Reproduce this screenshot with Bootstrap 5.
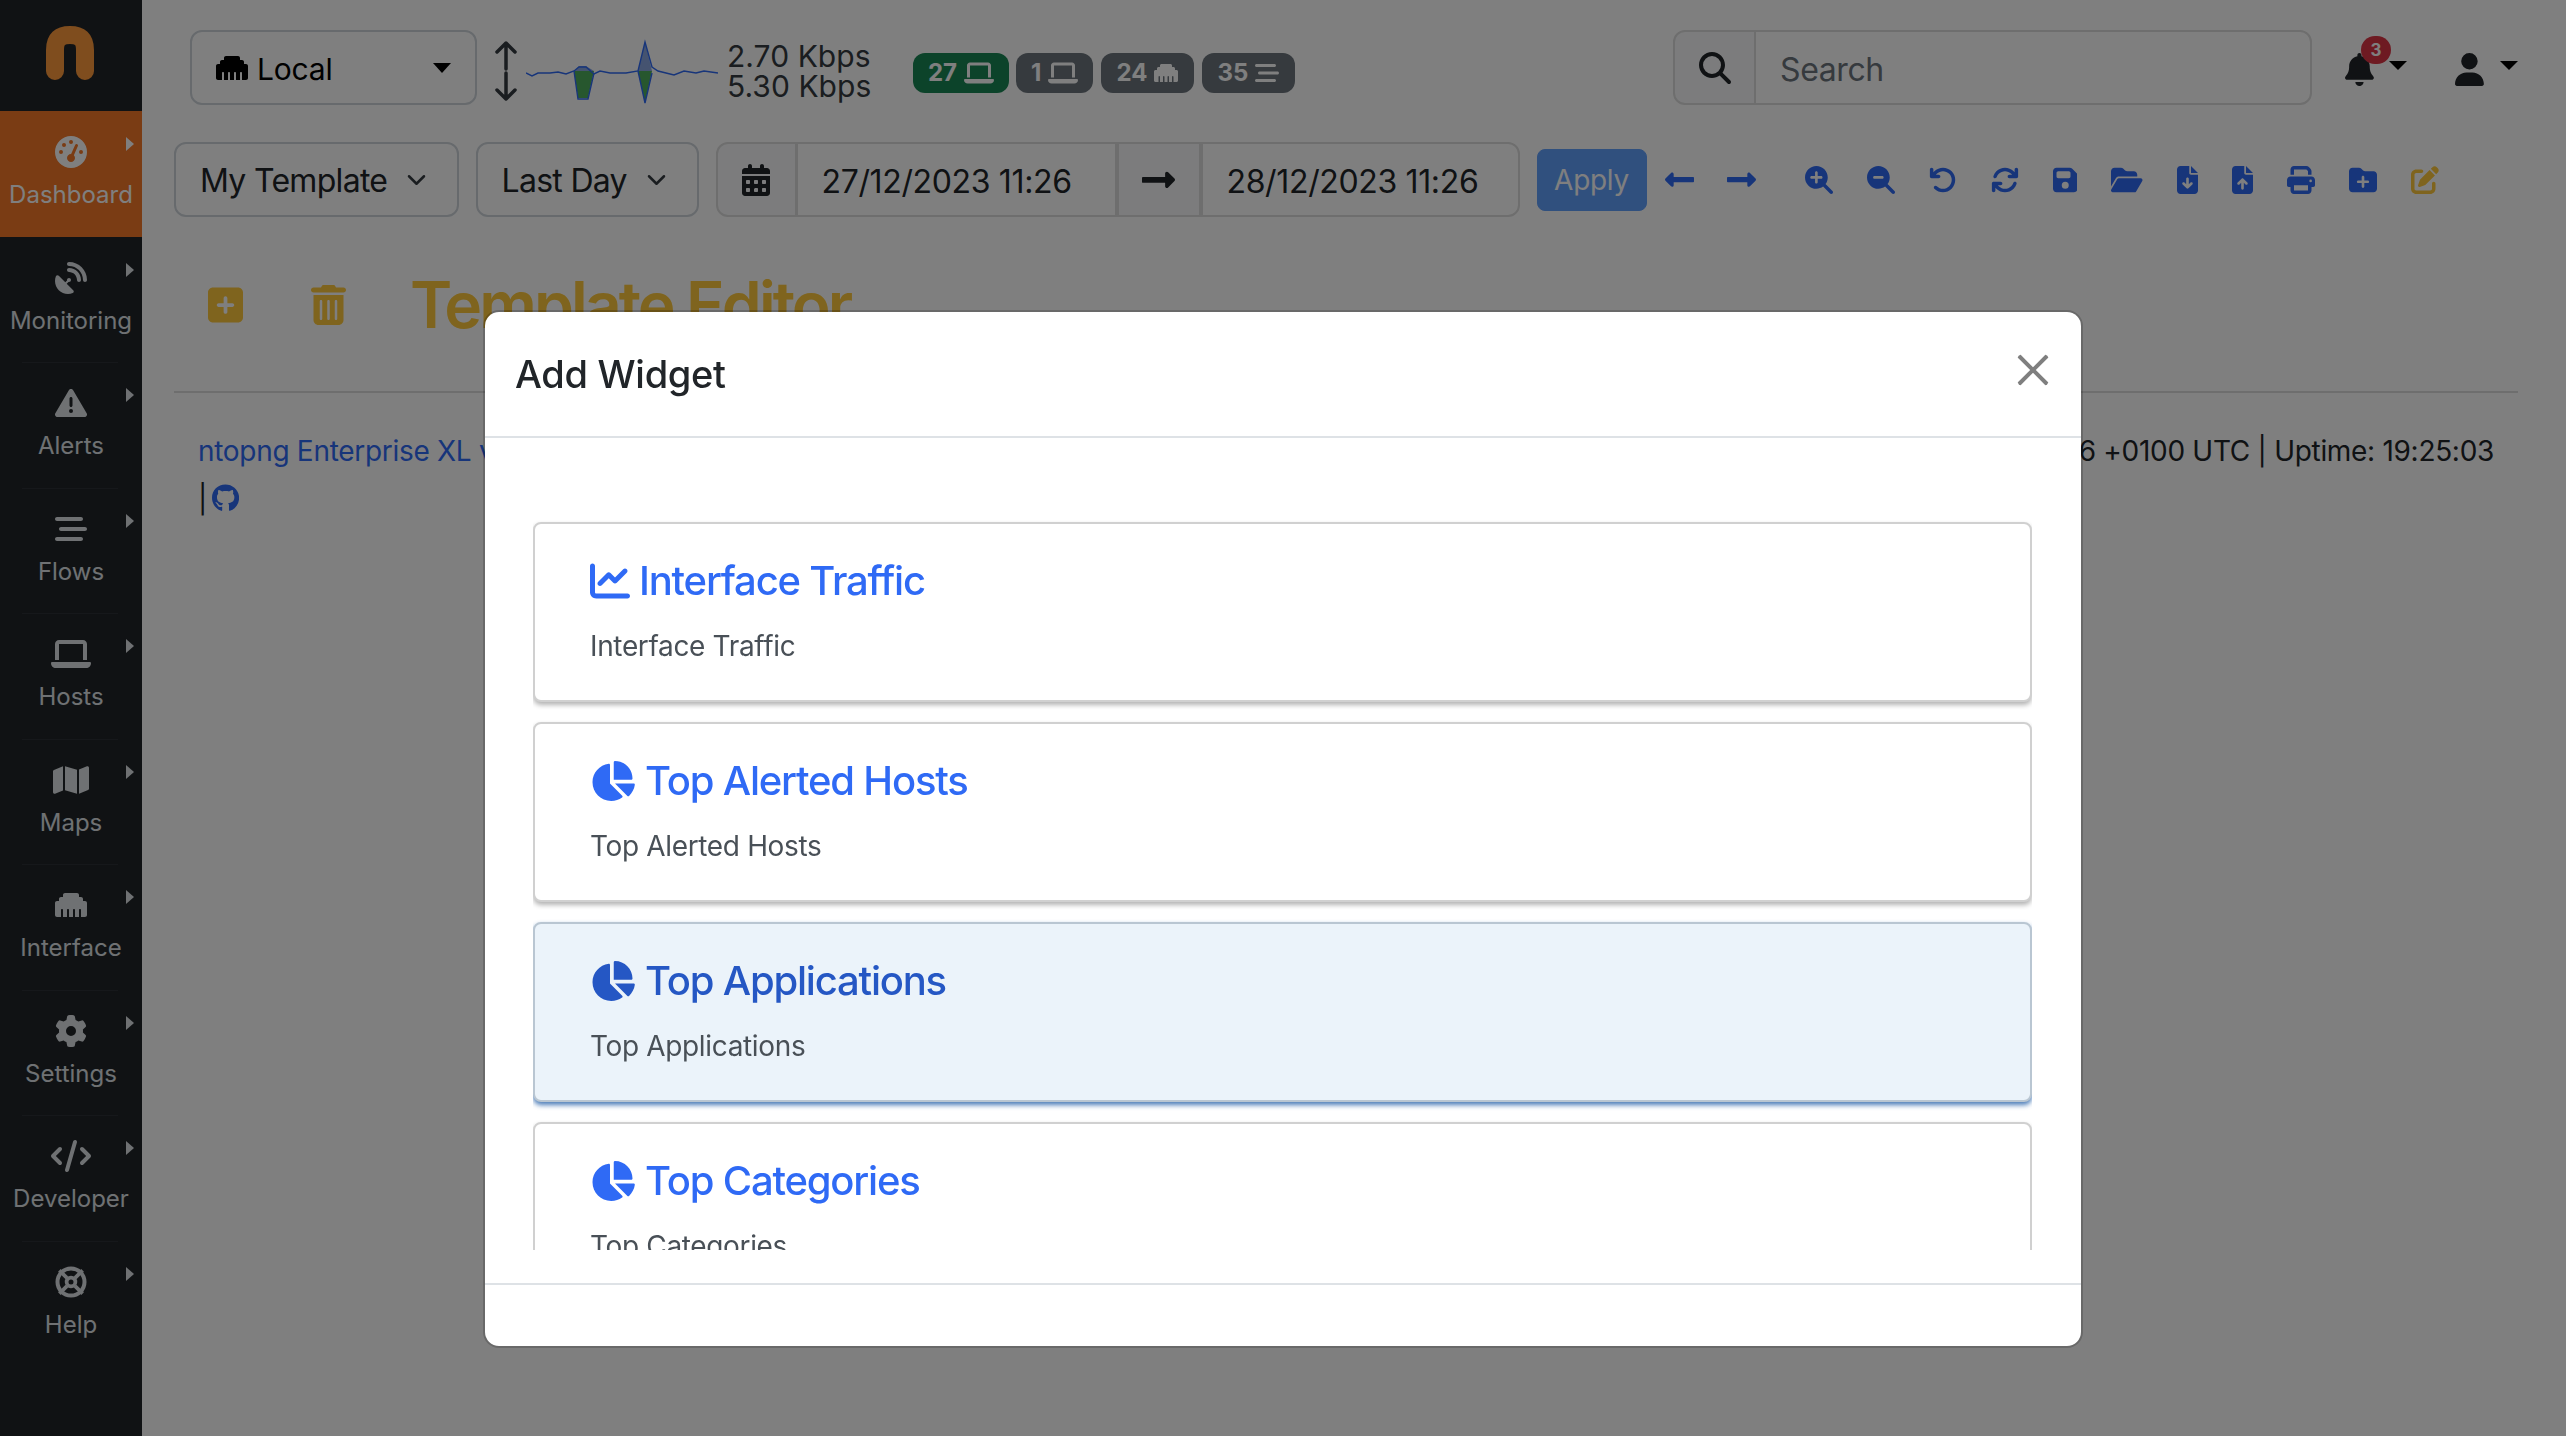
<!DOCTYPE html>
<html lang="en">
<head>
<meta charset="utf-8">
<title>Template Editor</title>
<link href="https://cdn.jsdelivr.net/npm/bootstrap@5.3.0/dist/css/bootstrap.min.css" rel="stylesheet">
<style>
html,body{height:100%;overflow:hidden}
body{font-family:Inter,"Liberation Sans",sans-serif;font-size:28px;color:#212529;background:#fff}
svg{fill:currentColor;flex:none;display:block}
a{color:#2f6af5;text-decoration:none}
.side{width:142px;flex:none;background:#212529;color:#dee2e6}
.brandbox{height:111px;padding:26px 0 0 46px;color:#ff9a3c}
.sitem{position:relative;height:125.5px;padding-top:25px;text-align:center;font-size:24px;line-height:36px}
.sitem svg{height:32px;margin:0 auto 9px}
.sitem.on{background:#f47828;color:#fff}
.sitem+.sitem:not(.nosep)::before{content:"";position:absolute;left:22px;right:24px;top:0;border-top:1px solid #2c3136}
.sarrow{position:absolute;left:126px;top:26px;border-left:8px solid currentColor;border-top:7px solid transparent;border-bottom:7px solid transparent}
.page{min-width:0}
.topline{height:75px;margin:30px 48px 0 48px}
.ifbtn{width:287px;height:75px;border:2px solid #ced4da;border-radius:12px;background:#fff;font-size:30px;padding:3px 24px 0;color:#000;letter-spacing:-.2px}
.ifbtn svg{height:32px;margin-right:9px;margin-top:-3px}
.ifbtn::after{margin-left:auto;border-width:10px 9px 0;color:#000;vertical-align:0;margin-top:-3px}
.tp-arrows{margin-left:17px;width:24px;margin-top:6px}
.spark{margin-left:8px;width:192px;height:70px;margin-top:8px}
.rates{margin-left:9px;font-size:30px;line-height:30px;white-space:nowrap;color:#343a40;width:186px;margin-top:6px;letter-spacing:.05px}
.chip{height:40px;display:inline-flex;align-items:center;gap:7px;padding:0 15px;font-size:24px;font-weight:700;border-radius:12px;margin-right:7px;line-height:1;margin-top:10px}
.chip+.chip{margin-right:8px}
.chip svg{height:24px}
.chip.w2{padding-right:16px}
.srch{width:639px;height:75px;margin-left:auto}
.srch .input-group-text,.srch .form-control{border:2px solid #dcdcdc;background:#fff;font-size:32px;border-radius:12px;height:75px}
.srch .input-group-text{width:83px;justify-content:center;padding:0;background:#f8f9fa}
.srch .input-group-text svg{height:32px}
.srch .form-control{padding:3px 24px 0;margin-left:-2px!important;letter-spacing:-.4px}
.srch .form-control::placeholder{color:#6c757d;opacity:1}
.bellbox{position:relative;margin-left:33px;width:62px;height:33px;margin-top:4px}
.bellbox svg{height:33px}
.userbox{position:relative;margin-left:48px;width:63px;height:33px;margin-top:4px}
.dcaret{position:absolute;right:0;top:8px;border-top:9px solid #000;border-left:9px solid transparent;border-right:9px solid transparent}
.bellpill{position:absolute;left:16px;top:-17px;width:30px;height:28px;padding:0;font-size:17px;line-height:28px}
.toolline{height:75px;margin:37px 48px 0 32px}
.toolline .form-select,.toolline .form-control,.toolline .input-group-text{height:75px;font-size:32px;border:2px solid #ced4da;border-radius:12px;color:#212529}
.toolline .form-select{padding:3px 24px 0;background-position:right 27px center;background-size:27px 20px;letter-spacing:-.7px}
.sel1{width:284.5px}
.sel2{width:223px;margin-left:17px}
.dates{width:auto;flex-wrap:nowrap;margin-left:17px}
.toolline .input-group-text{background:#f8f9fa;border-color:#dcdcdc;justify-content:center;padding:0}
.toolline .form-control{border-color:#dcdcdc;padding:3px 24px 0;letter-spacing:-.35px}
.cal{width:81px}
.cal svg{height:32px}
.arr{width:84px;margin-left:0!important}
.arr svg{width:33px}
.d1{width:321px!important;flex:none!important;margin-left:-1px!important}
.d2{width:319px!important;flex:none!important;margin-left:0!important}
.applyb{margin-left:17px;width:110px;height:62px;font-size:28px;padding:0;border-radius:8px;letter-spacing:-.3px}
.navarrows{margin-left:18px;gap:33px;color:#2f6af5}
.navarrows svg{width:29px}
.tools{margin-left:49px;gap:34.1px;color:#2f6af5}
.tools svg{height:28px}
.edit{color:#ffc83c}
.titleline{margin:49px 0 0 66px;height:77px;color:#ffc83c}
.titleline svg{height:40px}
.titleline .tr{margin-left:68px}
.titleline h2{margin:0 0 0 64px;font-size:64px;font-weight:600;line-height:77px;white-space:nowrap;letter-spacing:-2.9px;color:inherit}
.rule{margin:48px 48px 0 32px;border-top:2px solid #dcdcdc;opacity:1}
.infoline{margin:34px 72px 0 56px;line-height:48px;font-size:28px;letter-spacing:-.3px}
.infoline svg{height:28px;display:inline-block;vertical-align:-3px;color:#2f6af5;margin-left:-3px}
.modal-backdrop.show{opacity:.5}
.wmodal{--bs-modal-width:1600px}
.wmodal .modal-dialog{margin:310px auto 0;max-width:1600px;width:1600px}
.wmodal .modal-content{border-width:2px;border-radius:16px}
.wmodal .modal-header{height:126px;padding:40px 32px 0 30px;align-items:flex-start;border-bottom:2px solid #dee2e6;border-radius:0}
.wmodal .modal-title{font-size:38px;line-height:45px;font-weight:500;letter-spacing:-.3px}
.wmodal .btn-close{width:32px;height:32px;padding:0;margin:2px 0 0 auto;background-size:32px;box-sizing:border-box}
.wmodal .modal-body{padding:32px 49px 33px 48px}
.wlist{height:780px;overflow:hidden;padding-top:52px}
.wcard{height:180px;margin-bottom:20px;border:2px solid #d0d0d0;border-radius:8px;box-shadow:0 3px 5px rgba(0,0,0,.3);padding:33px 53px 0 55px;background:#fff}
.wcard h5{display:flex;align-items:center;margin:0 0 20px;font-size:40px;line-height:48px;font-weight:500;color:#2f6af5;letter-spacing:-1.2px}
.wcard p{margin:0;font-size:28px;line-height:42px;color:#495057;letter-spacing:-.35px}
.wcard h5 svg{height:40px;margin-right:10px}
.wcard.chartc h5 svg{margin-right:9px}
.wcard.hl{background:#ebf3fa;border-color:#b9c6d2;box-shadow:0 3px 5px rgba(15,80,160,.75)}
.wcard.hl h5{color:#2557c4}
.wmodal .modal-footer{min-height:63px;padding:0;border-top:2px solid #dee2e6;border-radius:0}
</style>
</head>
<body class="d-flex">
<svg width="0" height="0" class="position-absolute">
<defs>
<path id="i-eth" d="M0 224V416c0 17.7 14.3 32 32 32H96V336c0-8.8 7.2-16 16-16s16 7.2 16 16V448h64V336c0-8.8 7.2-16 16-16s16 7.2 16 16V448h64V336c0-8.8 7.2-16 16-16s16 7.2 16 16V448h64V336c0-8.8 7.2-16 16-16s16 7.2 16 16V448h64c17.7 0 32-14.3 32-32V224c0-17.7-14.3-32-32-32H448V160c0-17.7-14.3-32-32-32H384V96c0-17.7-14.3-32-32-32H160c-17.7 0-32 14.3-32 32v32H96c-17.7 0-32 14.3-32 32v32H32c-17.7 0-32 14.3-32 32z"/>
<path id="i-lap" d="M128 32C92.7 32 64 60.7 64 96V352h64V96H512V352h64V96c0-35.3-28.7-64-64-64H128zM19.2 384C8.6 384 0 392.6 0 403.2C0 445.6 34.4 480 76.8 480H563.2c42.4 0 76.8-34.4 76.8-76.8c0-10.6-8.6-19.2-19.2-19.2H19.2z"/>
<path id="i-flow" d="M0 96C0 78.3 14.3 64 32 64H416c17.7 0 32 14.3 32 32s-14.3 32-32 32H32C14.3 128 0 113.7 0 96zM64 256c0-17.7 14.3-32 32-32H480c17.7 0 32 14.3 32 32s-14.3 32-32 32H96c-17.7 0-32-14.3-32-32zM448 416c0 17.7-14.3 32-32 32H32c-17.7 0-32-14.3-32-32s14.3-32 32-32H416c17.7 0 32 14.3 32 32z"/>
<path id="i-pie" d="M304 240V16.6c0-9 7-16.6 16-16.6C443.7 0 544 100.3 544 224c0 9-7.6 16-16.6 16H304zM32 272C32 150.7 122.1 50.3 239 34.3c9.2-1.3 17 6.1 17 15.4V288L412.5 444.5c6.7 6.7 6.2 17.7-1.5 23.1C371.8 495.6 323.8 512 272 512C139.5 512 32 404.6 32 272zm526.4 16c9.3 0 16.6 7.8 15.4 17c-7.7 55.9-34.6 105.6-73.9 142.3c-6 5.6-15.4 5.2-21.2-.7L320 288H558.4z"/>
<path id="i-arr" d="M313.941 216H12c-6.627 0-12 5.373-12 12v56c0 6.627 5.373 12 12 12h301.941v46.059c0 21.382 25.851 32.09 40.971 16.971l86.059-86.059c9.373-9.373 9.373-24.569 0-33.941l-86.059-86.059c-15.119-15.119-40.971-4.411-40.971 16.971V216z"/>
</defs>
</svg>

<aside class="side d-flex flex-column">
  <div class="brandbox">
    <svg width="48" height="54" viewBox="0 0 48 54"><path d="M9 45V24C9 13 14 9 24 9s15 4 15 15V45" fill="none" stroke="currentColor" stroke-width="18" stroke-linecap="round"/></svg>
  </div>
  <div class="sitem on nosep"><svg viewBox="0 0 512 512"><path d="M0 256a256 256 0 1 1 512 0A256 256 0 1 1 0 256zM288 96a32 32 0 1 0 -64 0 32 32 0 1 0 64 0zM256 416c35.3 0 64-28.7 64-64c0-17.4-6.9-33.1-18.1-44.6L366 161.7c5.3-12.1-.2-26.3-12.3-31.6s-26.3 .2-31.6 12.3L257.9 288c-.6 0-1.3 0-1.9 0c-35.3 0-64 28.7-64 64s28.7 64 64 64zM176 144a32 32 0 1 0 -64 0 32 32 0 1 0 64 0zM96 288a32 32 0 1 0 0-64 32 32 0 1 0 0 64zm352-32a32 32 0 1 0 -64 0 32 32 0 1 0 64 0z"/></svg>Dashboard<span class="sarrow"></span></div>
  <div class="sitem nosep"><svg viewBox="0 0 512 512"><path d="M192 32c0-17.7 14.3-32 32-32C383.1 0 512 128.9 512 288c0 17.7-14.3 32-32 32s-32-14.3-32-32C448 164.3 347.7 64 224 64c-17.7 0-32-14.3-32-32zM60.6 220.6L164.7 324.7l28.4-28.4c-.7-2.6-1.1-5.4-1.1-8.3c0-17.7 14.3-32 32-32s32 14.3 32 32s-14.3 32-32 32c-2.9 0-5.6-.4-8.3-1.1l-28.4 28.4L291.4 451.4c14.5 14.5 11.8 38.8-7.3 46.3C260.5 506.9 234.9 512 208 512C93.1 512 0 418.9 0 304c0-26.9 5.1-52.5 14.4-76.1c7.5-19 31.8-21.8 46.2-7.3zM224 96c106 0 192 86 192 192c0 17.7-14.3 32-32 32s-32-14.3-32-32c0-70.7-57.3-128-128-128c-17.7 0-32-14.3-32-32s14.3-32 32-32z"/></svg>Monitoring<span class="sarrow"></span></div>
  <div class="sitem"><svg viewBox="0 0 512 512"><path d="M256 32c14.2 0 27.3 7.5 34.5 19.8l216 368c7.3 12.4 7.3 27.7 .2 40.1S486.3 480 472 480H40c-14.3 0-27.6-7.7-34.7-20.1s-7-27.8 .2-40.1l216-368C228.7 39.5 241.8 32 256 32zm0 128c-13.3 0-24 10.7-24 24V296c0 13.3 10.7 24 24 24s24-10.7 24-24V184c0-13.3-10.7-24-24-24zm32 224a32 32 0 1 0 -64 0 32 32 0 1 0 64 0z"/></svg>Alerts<span class="sarrow"></span></div>
  <div class="sitem"><svg viewBox="0 0 512 512"><use href="#i-flow"/></svg>Flows<span class="sarrow"></span></div>
  <div class="sitem"><svg viewBox="0 0 640 512"><use href="#i-lap"/></svg>Hosts<span class="sarrow"></span></div>
  <div class="sitem"><svg viewBox="0 0 576 512"><path d="M384 476.1L192 421.2V35.9L384 90.8V476.1zm32-1.2V88.4L543.1 37.5c15.8-6.3 32.9 5.3 32.9 22.3V394.6c0 9.8-6 18.6-15.1 22.3L416 474.8zM15.1 95.1L160 37.2V423.6L32.9 474.5C17.1 480.8 0 469.2 0 452.2V117.4c0-9.8 6-18.6 15.1-22.3z"/></svg>Maps<span class="sarrow"></span></div>
  <div class="sitem"><svg viewBox="0 0 512 512"><use href="#i-eth"/></svg>Interface<span class="sarrow"></span></div>
  <div class="sitem"><svg viewBox="0 0 512 512"><path d="M495.9 166.6c3.2 8.7 .5 18.4-6.4 24.6l-43.3 39.4c1.1 8.3 1.7 16.8 1.7 25.4s-.6 17.1-1.7 25.4l43.3 39.4c6.9 6.2 9.6 15.9 6.4 24.6c-4.4 11.9-9.7 23.3-15.8 34.3l-4.7 8.1c-6.6 11-14 21.4-22.1 31.2c-5.9 7.2-15.7 9.6-24.5 6.8l-55.7-17.7c-13.4 10.3-28.2 18.9-44 25.4l-12.5 57.1c-2 9.1-9 16.3-18.2 17.8c-13.8 2.3-28 3.5-42.5 3.5s-28.7-1.2-42.5-3.5c-9.2-1.5-16.2-8.7-18.2-17.8l-12.5-57.1c-15.8-6.5-30.6-15.1-44-25.4L83.1 425.9c-8.8 2.8-18.6 .3-24.5-6.8c-8.1-9.8-15.5-20.2-22.1-31.2l-4.7-8.1c-6.1-11-11.4-22.4-15.8-34.3c-3.2-8.7-.5-18.4 6.4-24.6l43.3-39.4C64.6 273.1 64 264.6 64 256s.6-17.1 1.7-25.4L22.4 191.2c-6.9-6.2-9.6-15.9-6.4-24.6c4.4-11.9 9.7-23.3 15.8-34.3l4.7-8.1c6.6-11 14-21.4 22.1-31.2c5.9-7.2 15.7-9.6 24.5-6.8l55.7 17.7c13.4-10.3 28.2-18.9 44-25.4l12.5-57.1c2-9.1 9-16.3 18.2-17.8C227.3 1.2 241.5 0 256 0s28.7 1.2 42.5 3.5c9.2 1.5 16.2 8.7 18.2 17.8l12.5 57.1c15.8 6.5 30.6 15.1 44 25.4l55.7-17.7c8.8-2.8 18.6-.3 24.5 6.8c8.1 9.8 15.5 20.2 22.1 31.2l4.7 8.1c6.1 11 11.4 22.4 15.8 34.3zM256 336a80 80 0 1 0 0-160 80 80 0 1 0 0 160z"/></svg>Settings<span class="sarrow"></span></div>
  <div class="sitem"><svg viewBox="0 0 640 512"><path d="M392.8 1.2c-17-4.9-34.7 5-39.6 22l-128 448c-4.9 17 5 34.7 22 39.6s34.7-5 39.6-22l128-448c4.9-17-5-34.7-22-39.6zm80.6 120.1c-12.5 12.5-12.5 32.8 0 45.3L562.7 256l-89.4 89.4c-12.5 12.5-12.5 32.8 0 45.3s32.8 12.5 45.3 0l112-112c12.5-12.5 12.5-32.8 0-45.3l-112-112c-12.5-12.5-32.8-12.5-45.3 0zm-306.7 0c-12.5-12.5-32.8-12.5-45.3 0l-112 112c-12.5 12.5-12.5 32.8 0 45.3l112 112c12.5 12.5 32.8 12.5 45.3 0s12.5-32.8 0-45.3L77.3 256l89.4-89.4c12.5-12.5 12.5-32.8 0-45.3z"/></svg>Developer<span class="sarrow"></span></div>
  <div class="sitem"><svg viewBox="0 0 512 512"><circle cx="256" cy="256" r="216" fill="none" stroke="currentColor" stroke-width="64"/><circle cx="256" cy="256" r="70" fill="none" stroke="currentColor" stroke-width="60"/><path d="M70 70l120 120M442 70L322 190M70 442l120-120M442 442L322 322" fill="none" stroke="currentColor" stroke-width="60"/></svg>Help<span class="sarrow"></span></div>
</aside>

<main class="page flex-grow-1">
  <div class="topline d-flex align-items-center">
    <button class="btn ifbtn dropdown-toggle d-flex align-items-center" type="button"><svg viewBox="0 0 512 512"><use href="#i-eth"/></svg>Local</button>
    <svg class="tp-arrows" height="60" viewBox="0 0 24 60"><path d="M12 2V28M3 11l9-9 9 9M12 32V58M3 49l9 9 9-9" fill="none" stroke="#343a40" stroke-width="3.5" stroke-linecap="round" stroke-linejoin="round"/></svg>
    <svg class="spark" viewBox="0 0 192 70">
      <path d="M0 34H48L52 61H62L68 34H112L119 66L126 34H192Z" fill="#4fae5c"/>
      <path d="M48 34L53 29H60L68 34ZM112 34L119 5L126 34Z" fill="#8aa7e0"/>
      <path d="M0 36L6 39L12 36H24L32 35L40 37L48 34L53 30H60L68 37L74 34L84 36H100L112 34L119 5L126 30L132 34L148 38L158 34L170 36L178 34L192 36" fill="none" stroke="#2f6af5" stroke-width="1.4"/>
      <path d="M48 34L52 62H62L68 36M112 34L119 66L126 36" fill="none" stroke="#2f6af5" stroke-width="1.4"/>
    </svg>
    <div class="rates">2.70 Kbps<br>5.30 Kbps</div>
    <span class="badge chip bg-success">27<svg viewBox="0 0 640 512"><use href="#i-lap"/></svg></span>
    <span class="badge chip bg-secondary">1<svg viewBox="0 0 640 512"><use href="#i-lap"/></svg></span>
    <span class="badge chip w2 bg-secondary">24<svg viewBox="0 0 512 512"><use href="#i-eth"/></svg></span>
    <span class="badge chip w2 bg-secondary">35<svg viewBox="0 0 512 512"><use href="#i-flow"/></svg></span>
    <div class="input-group srch flex-nowrap">
      <span class="input-group-text"><svg viewBox="0 0 512 512"><path d="M416 208c0 45.9-14.9 88.3-40 122.7L502.6 457.4c12.5 12.5 12.5 32.8 0 45.3s-32.8 12.5-45.3 0L330.7 376c-34.4 25.2-76.8 40-122.7 40C93.1 416 0 322.9 0 208S93.1 0 208 0S416 93.1 416 208zM208 352a144 144 0 1 0 0-288 144 144 0 1 0 0 288z"/></svg></span>
      <input class="form-control" type="text" placeholder="Search">
    </div>
    <div class="bellbox">
      <svg viewBox="0 0 448 512"><path d="M224 0c-17.7 0-32 14.3-32 32V51.2C119 66 64 130.6 64 208v18.8c0 47-17.3 92.4-48.5 127.6l-7.4 8.3c-8.4 9.4-10.4 22.9-5.3 34.4S19.4 416 32 416H416c12.6 0 24-7.4 29.2-18.9s3.1-25-5.3-34.4l-7.4-8.3C401.3 319.2 384 273.9 384 226.8V208c0-77.4-55-142-128-156.8V32c0-17.7-14.3-32-32-32zm45.3 493.3c12-12 18.7-28.3 18.7-45.3H224 160c0 17 6.7 33.3 18.7 45.3s28.3 18.7 45.3 18.7s33.3-6.7 45.3-18.7z"/></svg>
      <span class="badge rounded-pill bg-danger bellpill">3</span>
      <span class="dcaret"></span>
    </div>
    <div class="userbox">
      <svg height="33" viewBox="0 0 448 512"><path d="M224 256A128 128 0 1 0 224 0a128 128 0 1 0 0 256zm-45.7 48C79.8 304 0 383.8 0 482.3C0 498.7 13.3 512 29.7 512H418.3c16.4 0 29.7-13.3 29.7-29.7C448 383.8 368.2 304 269.7 304H178.3z"/></svg>
      <span class="dcaret"></span>
    </div>
  </div>

  <div class="toolline d-flex align-items-center">
    <select class="form-select sel1"><option>My Template</option></select>
    <select class="form-select sel2"><option>Last Day</option></select>
    <div class="input-group dates">
      <span class="input-group-text cal"><svg viewBox="0 0 448 512"><path d="M128 0c17.7 0 32 14.3 32 32V64H288V32c0-17.7 14.3-32 32-32s32 14.3 32 32V64h48c26.5 0 48 21.5 48 48v48H0V112C0 85.5 21.5 64 48 64H96V32c0-17.7 14.3-32 32-32zM0 192H448V464c0 26.5-21.5 48-48 48H48c-26.5 0-48-21.5-48-48V192zm64 80v32c0 8.8 7.2 16 16 16h32c8.8 0 16-7.2 16-16V272c0-8.8-7.2-16-16-16H80c-8.8 0-16 7.2-16 16zm128 0v32c0 8.8 7.2 16 16 16h32c8.8 0 16-7.2 16-16V272c0-8.8-7.2-16-16-16H208c-8.8 0-16 7.2-16 16zm144-16c-8.8 0-16 7.2-16 16v32c0 8.8 7.2 16 16 16h32c8.8 0 16-7.2 16-16V272c0-8.8-7.2-16-16-16H336zM64 400v32c0 8.8 7.2 16 16 16h32c8.8 0 16-7.2 16-16V400c0-8.8-7.2-16-16-16H80c-8.8 0-16 7.2-16 16zm144-16c-8.8 0-16 7.2-16 16v32c0 8.8 7.2 16 16 16h32c8.8 0 16-7.2 16-16V400c0-8.8-7.2-16-16-16H208c-8.8 0-16 7.2-16 16zm112 16v32c0 8.8 7.2 16 16 16h32c8.8 0 16-7.2 16-16V400c0-8.8-7.2-16-16-16H336c-8.8 0-16 7.2-16 16z"/></svg></span>
      <input class="form-control d1" type="text" value="27/12/2023 11:26">
      <span class="input-group-text arr"><svg viewBox="0 0 448 512"><use href="#i-arr"/></svg></span>
      <input class="form-control d2" type="text" value="28/12/2023 11:26">
    </div>
    <button class="btn btn-primary disabled applyb" type="button">Apply</button>
    <div class="d-flex align-items-center navarrows">
      <svg viewBox="0 0 448 512"><g transform="translate(448 0) scale(-1 1)"><use href="#i-arr"/></g></svg>
      <svg viewBox="0 0 448 512"><use href="#i-arr"/></svg>
    </div>
    <div class="d-flex align-items-center tools">
      <svg viewBox="0 0 512 512"><path d="M416 208c0 45.9-14.9 88.3-40 122.7L502.6 457.4c12.5 12.5 12.5 32.8 0 45.3s-32.8 12.5-45.3 0L330.7 376c-34.4 25.2-76.8 40-122.7 40C93.1 416 0 322.9 0 208S93.1 0 208 0S416 93.1 416 208zM184 296c0 13.3 10.7 24 24 24s24-10.7 24-24V232h64c13.3 0 24-10.7 24-24s-10.7-24-24-24H232V120c0-13.3-10.7-24-24-24s-24 10.7-24 24v64H120c-13.3 0-24 10.7-24 24s10.7 24 24 24h64v64z"/></svg>
      <svg viewBox="0 0 512 512"><path d="M416 208c0 45.9-14.9 88.3-40 122.7L502.6 457.4c12.5 12.5 12.5 32.8 0 45.3s-32.8 12.5-45.3 0L330.7 376c-34.4 25.2-76.8 40-122.7 40C93.1 416 0 322.9 0 208S93.1 0 208 0S416 93.1 416 208zM136 184c-13.3 0-24 10.7-24 24s10.7 24 24 24H280c13.3 0 24-10.7 24-24s-10.7-24-24-24H136z"/></svg>
      <svg viewBox="0 0 512 512"><path d="M125.7 160H176c17.7 0 32 14.3 32 32s-14.3 32-32 32H48c-17.7 0-32-14.3-32-32V64c0-17.7 14.3-32 32-32s32 14.3 32 32v51.2L97.6 97.6c87.5-87.5 229.3-87.5 316.8 0s87.5 229.3 0 316.8s-229.3 87.5-316.8 0c-12.5-12.5-12.5-32.8 0-45.3s32.8-12.5 45.3 0c62.5 62.5 163.8 62.5 226.3 0s62.5-163.8 0-226.3s-163.8-62.5-226.3 0L125.7 160z"/></svg>
      <svg viewBox="0 0 512 512"><path d="M105.1 202.6c7.7-21.8 20.2-42.3 37.8-59.8c62.5-62.5 163.8-62.5 226.3 0L386.3 160H336c-17.7 0-32 14.3-32 32s14.3 32 32 32H463.5c0 0 0 0 0 0h.4c17.7 0 32-14.3 32-32V64c0-17.7-14.3-32-32-32s-32 14.3-32 32v51.2L414.4 97.6c-87.5-87.5-229.3-87.5-316.8 0C73.2 122 55.6 150.7 44.8 181.4c-5.9 16.7 2.9 34.9 19.5 40.8s34.9-2.9 40.8-19.5zM39 289.3c-5 1.5-9.8 4.2-13.7 8.2c-4 4-6.7 8.8-8.1 14c-.3 1.2-.6 2.5-.8 3.8c-.3 1.7-.4 3.4-.4 5.1V448c0 17.7 14.3 32 32 32s32-14.3 32-32V396.9l17.6 17.5 0 0c87.5 87.4 229.3 87.4 316.7 0c24.4-24.4 42.1-53.1 52.9-83.7c5.9-16.7-2.9-34.9-19.5-40.8s-34.9 2.9-40.8 19.5c-7.7 21.8-20.2 42.3-37.8 59.8c-62.5 62.5-163.8 62.5-226.3 0l-.1-.1L125.6 352H176c17.7 0 32-14.3 32-32s-14.3-32-32-32H48.4c-1.6 0-3.2 .1-4.8 .3s-3.1 .5-4.6 1z"/></svg>
      <svg viewBox="0 0 448 512"><path d="M64 32C28.7 32 0 60.7 0 96V416c0 35.3 28.7 64 64 64H384c35.3 0 64-28.7 64-64V173.3c0-17-6.7-33.3-18.7-45.3L352 50.7C340 38.7 323.7 32 306.7 32H64zm0 96c0-17.7 14.3-32 32-32H288c17.7 0 32 14.3 32 32v64c0 17.7-14.3 32-32 32H96c-17.7 0-32-14.3-32-32V128zM224 288a64 64 0 1 1 0 128 64 64 0 1 1 0-128z"/></svg>
      <svg viewBox="0 0 576 512"><path d="M88.7 223.8L0 375.8V96C0 60.7 28.7 32 64 32H181.5c17 0 33.3 6.7 45.3 18.7l26.5 26.5c12 12 28.3 18.7 45.3 18.7H416c35.3 0 64 28.7 64 64v32H144c-22.8 0-43.8 12.1-55.3 31.8zm27.6 16.1C122.1 230 132.6 224 144 224H544c11.5 0 22 6.1 27.7 16.1s5.7 22.2-.1 32.1l-112 192C453.9 474 443.4 480 432 480H32c-11.5 0-22-6.1-27.7-16.1s-5.7-22.2 .1-32.1l112-192z"/></svg>
      <svg viewBox="0 0 384 512"><path d="M64 0C28.7 0 0 28.7 0 64V448c0 35.3 28.7 64 64 64H320c35.3 0 64-28.7 64-64V160H256c-17.7 0-32-14.3-32-32V0H64zM256 0V128H384L256 0zM216 232V334.1l31-31c9.4-9.4 24.6-9.4 33.9 0s9.4 24.6 0 33.9l-72 72c-9.4 9.4-24.6 9.4-33.9 0l-72-72c-9.4-9.4-9.4-24.6 0-33.9s24.6-9.4 33.9 0l31 31V232c0-13.3 10.7-24 24-24s24 10.7 24 24z"/></svg>
      <svg viewBox="0 0 384 512"><path d="M64 0C28.7 0 0 28.7 0 64V448c0 35.3 28.7 64 64 64H320c35.3 0 64-28.7 64-64V160H256c-17.7 0-32-14.3-32-32V0H64zM256 0V128H384L256 0zM216 408c0 13.3-10.7 24-24 24s-24-10.7-24-24V305.9l-31 31c-9.4 9.4-24.6 9.4-33.9 0s-9.4-24.6 0-33.9l72-72c9.4-9.4 24.6-9.4 33.9 0l72 72c9.4 9.4 9.4 24.6 0 33.9s-24.6 9.4-33.9 0l-31-31V408z"/></svg>
      <svg viewBox="0 0 512 512"><path d="M128 0C92.7 0 64 28.7 64 64v96h64V64H354.7L384 93.3V160h64V93.3c0-17-6.7-33.3-18.7-45.3L400 18.7C388 6.7 371.7 0 354.7 0H128zM384 352v32 64H128V384 368 352H384zm64 32h32c17.7 0 32-14.3 32-32V256c0-35.3-28.7-64-64-64H64c-35.3 0-64 28.7-64 64v96c0 17.7 14.3 32 32 32H64v64c0 35.3 28.7 64 64 64H384c35.3 0 64-28.7 64-64V384zM432 248a24 24 0 1 1 0 48 24 24 0 1 1 0-48z"/></svg>
      <svg viewBox="0 0 512 512"><path d="M512 416c0 35.3-28.7 64-64 64H64c-35.3 0-64-28.7-64-64V96C0 60.7 28.7 32 64 32H181.5c17 0 33.3 6.7 45.3 18.7l26.5 26.5c12 12 28.3 18.7 45.3 18.7H448c35.3 0 64 28.7 64 64V416zM232 376c0 13.3 10.7 24 24 24s24-10.7 24-24V312h64c13.3 0 24-10.7 24-24s-10.7-24-24-24H280V200c0-13.3-10.7-24-24-24s-24 10.7-24 24v64H168c-13.3 0-24 10.7-24 24s10.7 24 24 24h64v64z"/></svg>
      <svg class="edit" viewBox="0 0 512 512"><path d="M471.6 21.7c-21.9-21.9-57.3-21.9-79.2 0L362.3 51.7l97.9 97.9 30.1-30.1c21.9-21.9 21.9-57.3 0-79.2L471.6 21.7zm-299.2 220c-6.1 6.1-10.8 13.6-13.5 21.9l-29.6 88.8c-2.9 8.6-.6 18.1 5.8 24.6s15.9 8.7 24.6 5.8l88.8-29.6c8.2-2.7 15.7-7.4 21.9-13.5L437.7 172.3 339.7 74.3 172.4 241.7zM96 64C43 64 0 107 0 160V416c0 53 43 96 96 96H352c53 0 96-43 96-96V320c0-17.7-14.3-32-32-32s-32 14.3-32 32v96c0 17.7-14.3 32-32 32H96c-17.7 0-32-14.3-32-32V160c0-17.7 14.3-32 32-32h96c17.7 0 32-14.3 32-32s-14.3-32-32-32H96z"/></svg>
    </div>
  </div>

  <div class="titleline d-flex align-items-center">
    <svg viewBox="0 0 448 512"><path d="M64 32C28.7 32 0 60.7 0 96V416c0 35.3 28.7 64 64 64H384c35.3 0 64-28.7 64-64V96c0-35.3-28.7-64-64-64H64zM200 344V280H136c-13.3 0-24-10.7-24-24s10.7-24 24-24h64V168c0-13.3 10.7-24 24-24s24 10.7 24 24v64h64c13.3 0 24 10.7 24 24s-10.7 24-24 24H248v64c0 13.3-10.7 24-24 24s-24-10.7-24-24z"/></svg>
    <svg class="tr" viewBox="0 0 448 512"><path d="M135.2 17.7C140.6 6.8 151.7 0 163.8 0H284.2c12.1 0 23.2 6.8 28.6 17.7L320 32h96c17.7 0 32 14.3 32 32s-14.3 32-32 32H32C14.3 96 0 81.7 0 64S14.3 32 32 32h96l7.2-14.3zM32 128H416V448c0 35.3-28.7 64-64 64H96c-35.3 0-64-28.7-64-64V128zm96 64c-8.8 0-16 7.2-16 16V432c0 8.8 7.2 16 16 16s16-7.2 16-16V208c0-8.8-7.2-16-16-16zm96 0c-8.8 0-16 7.2-16 16V432c0 8.8 7.2 16 16 16s16-7.2 16-16V208c0-8.8-7.2-16-16-16zm96 0c-8.8 0-16 7.2-16 16V432c0 8.8 7.2 16 16 16s16-7.2 16-16V208c0-8.8-7.2-16-16-16z"/></svg>
    <h2>Template Editor</h2>
  </div>
  <hr class="rule">
  <div class="infoline d-flex justify-content-between">
    <div><a href="#">ntopng Enterprise XL v.6.1</a><br>| <a href="#"><svg viewBox="0 0 496 512"><path d="M244.8 8C106.1 8 0 113.3 0 252c0 110.9 69.8 205.8 169.5 239.2 12.8 2.3 17.3-5.6 17.3-12.1 0-6.2-.3-40.4-.3-61.4 0 0-70 15-84.7-29.8 0 0-11.4-29.1-27.8-36.6 0 0-22.9-15.7 1.6-15.4 0 0 24.9 2 38.6 25.8 21.9 38.6 58.6 27.5 72.9 20.9 2.3-16 8.8-27.1 16-33.7-55.9-6.2-112.3-14.3-112.3-110.5 0-27.5 7.6-41.3 23.6-58.9-2.6-6.5-11.1-33.3 2.6-67.9 20.9-6.5 69 27 69 27 20-5.6 41.5-8.5 62.8-8.5s42.8 2.9 62.8 8.5c0 0 48.1-33.6 69-27 13.7 34.7 5.2 61.4 2.6 67.9 16 17.7 25.8 31.5 25.8 58.9 0 96.5-58.9 104.2-114.8 110.5 9.2 7.9 17 22.9 17 46.4 0 33.7-.3 75.4-.3 83.6 0 6.5 4.6 14.4 17.3 12.1C428.2 457.8 496 362.9 496 252 496 113.3 383.5 8 244.8 8z"/></svg></a></div>
    <div>Thu Dec 28 11:26:26 +0100 UTC | Uptime: 19:25:03</div>
  </div>
</main>

<div class="modal-backdrop fade show"></div>
<div class="modal fade show d-block wmodal" tabindex="-1">
  <div class="modal-dialog">
    <div class="modal-content">
      <div class="modal-header">
        <h5 class="modal-title">Add Widget</h5>
        <button type="button" class="btn-close" aria-label="Close"></button>
      </div>
      <div class="modal-body">
        <div class="wlist">
          <div class="wcard chartc"><h5><svg viewBox="0 0 512 512"><path d="M64 64c0-17.7-14.3-32-32-32S0 46.3 0 64V400c0 44.2 35.8 80 80 80H480c17.7 0 32-14.3 32-32s-14.3-32-32-32H80c-8.8 0-16-7.2-16-16V64zm406.6 86.6c12.5-12.5 12.5-32.8 0-45.3s-32.8-12.5-45.3 0L320 210.7l-57.4-57.4c-12.5-12.5-32.8-12.5-45.3 0l-112 112c-12.5 12.5-12.5 32.8 0 45.3s32.8 12.5 45.3 0L240 221.3l57.4 57.4c12.5 12.5 32.8 12.5 45.3 0l128-128z"/></svg>Interface Traffic</h5><p>Interface Traffic</p></div>
          <div class="wcard"><h5><svg viewBox="0 0 576 512"><use href="#i-pie"/></svg>Top Alerted Hosts</h5><p>Top Alerted Hosts</p></div>
          <div class="wcard hl"><h5><svg viewBox="0 0 576 512"><use href="#i-pie"/></svg>Top Applications</h5><p>Top Applications</p></div>
          <div class="wcard"><h5><svg viewBox="0 0 576 512"><use href="#i-pie"/></svg>Top Categories</h5><p>Top Categories</p></div>
        </div>
      </div>
      <div class="modal-footer"></div>
    </div>
  </div>
</div>
<script src="https://cdn.jsdelivr.net/npm/bootstrap@5.3.0/dist/js/bootstrap.bundle.min.js"></script>
</body>
</html>
